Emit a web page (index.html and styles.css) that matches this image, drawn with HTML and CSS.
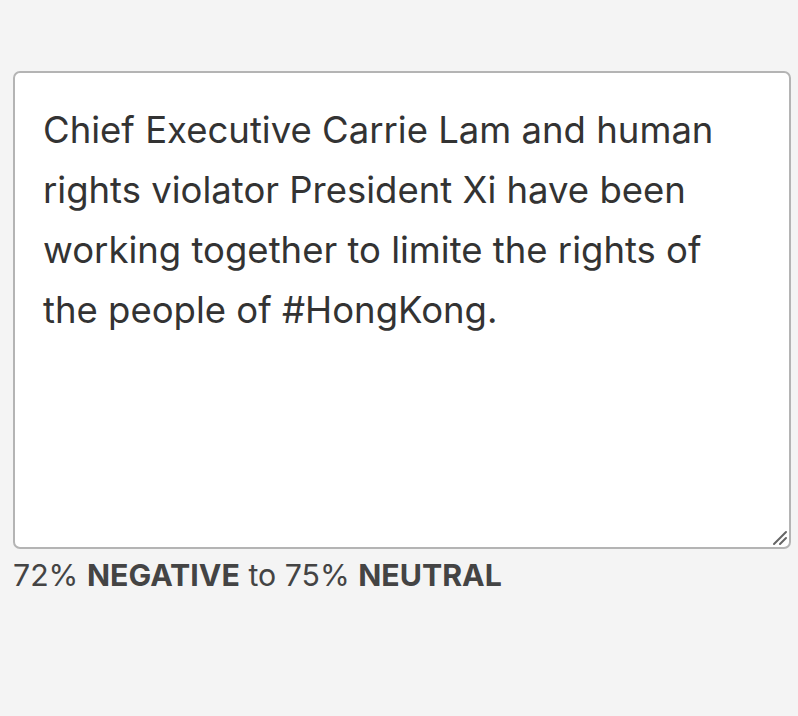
FILE: index.html
```html
<!DOCTYPE html>
<html>
<head>
<meta charset="utf-8">
<link rel="stylesheet" href="styles.css">
</head>
<body>
<div class="page">
  <div class="field">
    <textarea class="input" readonly>Chief Executive Carrie Lam and human rights violator President Xi have been working together to limite the rights of the people of #HongKong.</textarea>
    <svg class="grip" width="16" height="16" viewBox="0 0 16 16"><path d="M2 14 L14 2 M8 14 L14 8" stroke="#666" stroke-width="2" stroke-linecap="round" fill="none"/></svg>
  </div>
  <div class="result">72% <b>NEGATIVE</b> to 75% <b>NEUTRAL</b></div>
</div>
</body>
</html>
```

FILE: styles.css
```css
html, body {
  margin: 0;
  background: #f4f4f4;
}
.page {
  padding: 71px 7px 0 13px;
  display: flex;
  flex-direction: column;
  font-family: Inter, "Liberation Sans", sans-serif;
}
.field {
  position: relative;
  width: 778px;
  height: 478px;
}
.input {
  display: block;
  box-sizing: border-box;
  width: 100%;
  height: 100%;
  margin: 0;
  border: 2px solid #b4b4b4;
  border-radius: 7px;
  background: #fff;
  padding: 27px 50px 27px 28px;
  font-family: Inter, "Liberation Sans", sans-serif;
  font-size: 36.5px;
  line-height: 60px;
  color: #333;
  outline: none;
  resize: none;
}
.grip {
  position: absolute;
  right: 3px;
  bottom: 3px;
}
.result {
  margin-top: 6px;
  font-size: 30.3px;
  line-height: 40px;
  color: #444;
}
.result b {
  font-weight: 700;
}
```
